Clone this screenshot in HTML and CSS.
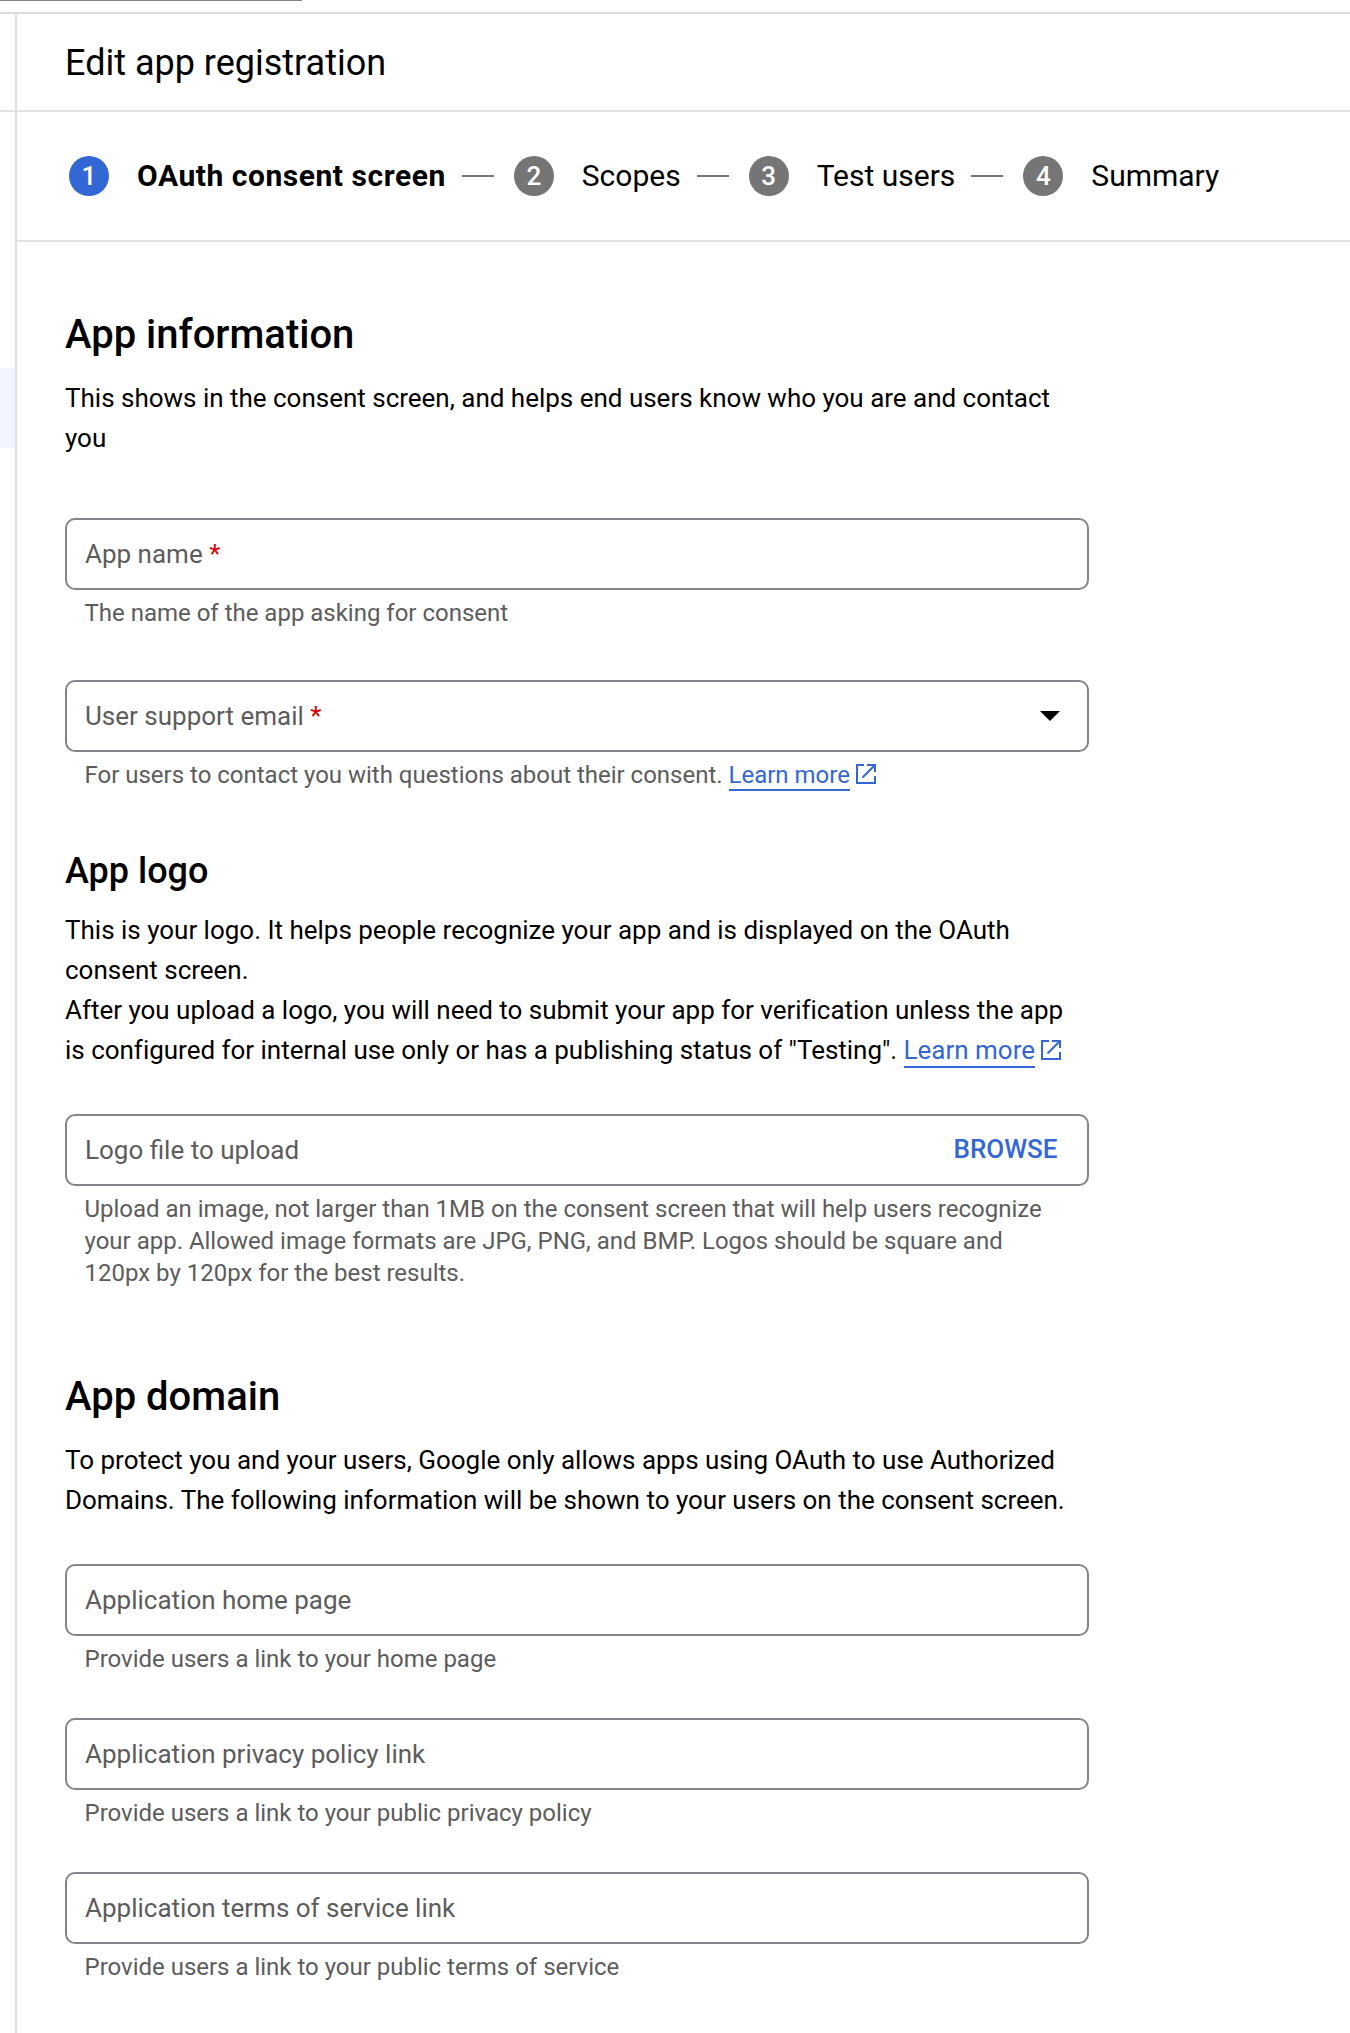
FILE: index.html
```html
<!DOCTYPE html>
<html lang="en">
<head>
<meta charset="utf-8">
<title>Edit app registration</title>
<link rel="stylesheet" href="styles.css">
</head>
<body>
<div class="scroll-track"><div class="scroll-thumb"></div></div>
<div class="shell">
  <aside class="rail">
    <div class="rail-head"></div>
    <div class="rail-active"></div>
  </aside>
  <main class="main">
    <header class="header"><h1 class="title">Edit app registration</h1></header>
    <ol class="stepper">
      <li class="step step-current"><span class="num">1</span><span class="step-label">OAuth consent screen</span></li>
      <li class="step"><span class="num">2</span><span class="step-label">Scopes</span></li>
      <li class="step"><span class="num">3</span><span class="step-label">Test users</span></li>
      <li class="step"><span class="num">4</span><span class="step-label">Summary</span></li>
    </ol>
    <div class="content">
      <section class="section">
        <h2 class="heading">App information</h2>
        <p class="text text-intro">This shows in the consent screen, and helps end users know who you are and contact you</p>
        <div class="field"><span class="label">App name <span class="req">*</span></span></div>
        <p class="hint">The name of the app asking for consent</p>
        <div class="field field-support"><span class="label">User support email <span class="req">*</span></span>
          <svg class="caret" viewBox="0 0 20 10"><path d="M0 0h20L10 10z"/></svg>
        </div>
        <p class="hint">For users to contact you with questions about their consent. <a class="link">Learn more</a><svg class="ext" viewBox="0 0 20 20"><path d="M8 1H1v18h18v-7M11 1h8v7M19 1L6.5 13.5"/></svg></p>
      </section>
      <section class="section section-logo">
        <h3 class="heading heading-small">App logo</h3>
        <p class="text text-tight">This is your logo. It helps people recognize your app and is displayed on the OAuth consent screen.</p>
        <p class="text text-verify">After you upload a logo, you will need to submit your app for verification unless the app is configured for internal use only or has a publishing status of "Testing". <a class="link">Learn more</a><svg class="ext" viewBox="0 0 20 20"><path d="M8 1H1v18h18v-7M11 1h8v7M19 1L6.5 13.5"/></svg></p>
        <div class="field field-upload"><span class="label">Logo file to upload</span><span class="browse">BROWSE</span></div>
        <p class="hint">Upload an image, not larger than 1MB on the consent screen that will help users recognize your app. Allowed image formats are JPG, PNG, and BMP. Logos should be square and 120px by 120px for the best results.</p>
      </section>
      <section class="section section-domain">
        <h2 class="heading">App domain</h2>
        <p class="text">To protect you and your users, Google only allows apps using OAuth to use Authorized Domains. The following information will be shown to your users on the consent screen.</p>
        <div class="field"><span class="label">Application home page</span></div>
        <p class="hint">Provide users a link to your home page</p>
        <div class="field field-next"><span class="label">Application privacy policy link</span></div>
        <p class="hint">Provide users a link to your public privacy policy</p>
        <div class="field field-next"><span class="label">Application terms of service link</span></div>
        <p class="hint">Provide users a link to your public terms of service</p>
      </section>
    </div>
  </main>
</div>
</body>
</html>
```
FILE: styles.css
```css
* { box-sizing: border-box; margin: 0; padding: 0; }
body {
  height: 2033px;
  overflow: hidden;
  display: flex;
  flex-direction: column;
  background: #fff;
  color: #000;
  font-family: Roboto, sans-serif;
}
.scroll-track { height: 14px; flex: none; border-bottom: 2px solid #dadce0; }
.scroll-thumb { width: 302px; height: 1px; background: #80868b; }
.shell { flex: 1; display: flex; }
.rail { width: 15px; flex: none; }
.rail-head { height: 98px; border-bottom: 2px solid #e0e0e0; }
.rail-active { height: 80px; margin-top: 256px; background: #f0f5ff; }
.main { flex: 1; border-left: 2px solid #e0e0e0; }
.header {
  height: 98px;
  padding: 2px 0 0 48px;
  display: flex;
  align-items: center;
  border-bottom: 2px solid #e0e0e0;
}
.title { font-size: 36px; font-weight: 400; line-height: 48px; }
.stepper {
  height: 130px;
  padding-left: 52px;
  display: flex;
  align-items: center;
  list-style: none;
  border-bottom: 2px solid #e0e0e0;
}
.step { display: flex; align-items: center; font-size: 30px; line-height: 40px; }
.step + .step::before {
  content: "";
  width: 32px;
  height: 2px;
  margin: 0 20px 0 16px;
  background: #757575;
}
.num {
  width: 40px;
  height: 40px;
  margin-right: 28px;
  border-radius: 50%;
  background: #757575;
  color: #fff;
  font-size: 26px;
  font-weight: 500;
  text-align: center;
}
.step-current .step-label { font-weight: 700; letter-spacing: 0.54px; }
.step-current .num { background: #3367d6; }
.content { width: 1072px; padding: 69px 0 0 48px; }
.heading { font-size: 40px; font-weight: 500; line-height: 48px; margin-bottom: 19px; }
.heading-small { font-size: 36px; margin-bottom: 15px; }
.section-logo { margin-top: 56px; }
.section-domain { margin-top: 84px; }
.text { font-size: 26px; line-height: 40px; margin-bottom: 44px; letter-spacing: -0.01px; }
.text-tight { margin-bottom: 0; }
.text-verify { letter-spacing: -0.02px; }
.text-intro { margin-bottom: 60px; }
.field {
  height: 72px;
  padding: 0 30px 0 18px;
  display: flex;
  align-items: center;
  justify-content: space-between;
  border: 2px solid #80868b;
  border-radius: 10px;
  color: #5c5c5c;
  font-size: 26px;
  line-height: 40px;
}
.field-support { margin-top: 51px; padding-right: 27px; }
.field-upload { padding-right: 29.5px; }
.field-next { margin-top: 43px; }
.req { color: #d50000; }
.caret { width: 20px; height: 10px; fill: #000; }
.browse { font-weight: 500; color: #3367d6; padding-bottom: 2px; }
.hint {
  margin-top: 7px;
  padding: 0 20px 0 19.5px;
  color: #5c5c5c;
  font-size: 24px;
  line-height: 32px;
  letter-spacing: -0.008px;
}
.link { color: #3367d6; border-bottom: 2px solid #3367d6; padding-bottom: 1px; }
.hint .link { padding-bottom: 0; }
.ext {
  width: 20px;
  height: 20px;
  margin-left: 6px;
  vertical-align: -1px;
  fill: none;
  stroke: #3367d6;
  stroke-width: 2;
}
```
